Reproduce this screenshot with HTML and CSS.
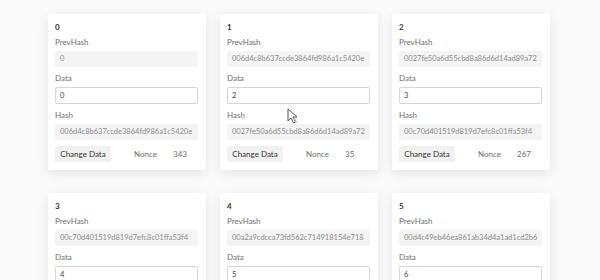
FILE: index.html
```html
<!DOCTYPE html>
<html lang="en">
<head>
    <meta charset="UTF-8">
    <meta name="viewport" content="width=device-width, initial-scale=1.0">
    <title>Blockchain</title>
    <link rel="stylesheet" href="styles.css">
</head>
<body>
    <div class="chain">
        <div class="block">
            <div class="block-id">0</div>
            <label class="field-label">PrevHash</label>
            <div class="field">0</div>
            <label class="field-label">Data</label>
            <input class="data-input" type="text" value="0">
            <label class="field-label">Hash</label>
            <div class="field">006d4c8b637ccde3864fd986a1c5420e</div>
            <div class="block-footer">
                <button class="change-btn">Change Data</button>
                <span class="nonce-label">Nonce</span>
                <span class="nonce-value">343</span>
            </div>
        </div>

        <div class="block">
            <div class="block-id">1</div>
            <label class="field-label">PrevHash</label>
            <div class="field">006d4c8b637ccde3864fd986a1c5420e</div>
            <label class="field-label">Data</label>
            <input class="data-input" type="text" value="2">
            <label class="field-label">Hash</label>
            <div class="field">0027fe50a6d55cbd8a86d6d14ad89a72</div>
            <div class="block-footer">
                <button class="change-btn">Change Data</button>
                <span class="nonce-label">Nonce</span>
                <span class="nonce-value">35</span>
            </div>
            <svg class="cursor" width="11" height="16" viewBox="0 0 11 16">
                <path d="M1 1 L1 13 L4 10 L6.5 15 L8.5 14 L6 9 L10 9 Z" fill="#fff" stroke="#555" stroke-width="1" stroke-linejoin="round"/>
                <path d="M7 10 L9.5 14.5" stroke="#bbb" stroke-width="1.5"/>
            </svg>
        </div>

        <div class="block">
            <div class="block-id">2</div>
            <label class="field-label">PrevHash</label>
            <div class="field">0027fe50a6d55cbd8a86d6d14ad89a72</div>
            <label class="field-label">Data</label>
            <input class="data-input" type="text" value="3">
            <label class="field-label">Hash</label>
            <div class="field">00c70d401519d819d7efc8c01ffa53f4</div>
            <div class="block-footer">
                <button class="change-btn">Change Data</button>
                <span class="nonce-label">Nonce</span>
                <span class="nonce-value">267</span>
            </div>
        </div>

        <div class="block">
            <div class="block-id">3</div>
            <label class="field-label">PrevHash</label>
            <div class="field">00c70d401519d819d7efc8c01ffa53f4</div>
            <label class="field-label">Data</label>
            <input class="data-input" type="text" value="4">
            <label class="field-label">Hash</label>
            <div class="field">00b7e1c2a94f3d6e58a0c7d2e1f93b46</div>
            <div class="block-footer">
                <button class="change-btn">Change Data</button>
                <span class="nonce-label">Nonce</span>
                <span class="nonce-value">112</span>
            </div>
        </div>

        <div class="block">
            <div class="block-id">4</div>
            <label class="field-label">PrevHash</label>
            <div class="field">00a2a9cdcca73fd562c714918154e718</div>
            <label class="field-label">Data</label>
            <input class="data-input" type="text" value="5">
            <label class="field-label">Hash</label>
            <div class="field">00d4c49eb46ea861ab34d4a1ad1cd2b6</div>
            <div class="block-footer">
                <button class="change-btn">Change Data</button>
                <span class="nonce-label">Nonce</span>
                <span class="nonce-value">58</span>
            </div>
        </div>

        <div class="block">
            <div class="block-id">5</div>
            <label class="field-label">PrevHash</label>
            <div class="field">00d4c49eb46ea861ab34d4a1ad1cd2b6</div>
            <label class="field-label">Data</label>
            <input class="data-input" type="text" value="6">
            <label class="field-label">Hash</label>
            <div class="field">0039a6e1f7c24b8d905e3f1a6c7b2d84</div>
            <div class="block-footer">
                <button class="change-btn">Change Data</button>
                <span class="nonce-label">Nonce</span>
                <span class="nonce-value">201</span>
            </div>
        </div>
    </div>
</body>
</html>
```

FILE: styles.css
```css
* {
    margin: 0;
    padding: 0;
    box-sizing: border-box;
}
body {
    font-family: Lato, 'Open Sans', sans-serif;
    background: #fafafb;
    color: #333;
    height: 280px;
    overflow: hidden;
}
.chain {
    display: grid;
    grid-template-columns: repeat(3, 158px);
    column-gap: 14px;
    row-gap: 23px;
    padding: 14px 0 0 48px;
}
.block {
    position: relative;
    background: #fff;
    border-radius: 2px;
    box-shadow: 0 3px 12px rgba(0, 0, 0, 0.09);
    padding: 8px 8px 8px 7px;
    display: flex;
    flex-direction: column;
}
.block-id {
    font-size: 8px;
    font-weight: 700;
    line-height: 10px;
    color: #333;
}
.field-label {
    display: block;
    font-size: 8px;
    line-height: 10px;
    color: #6e6e6e;
    margin: 6px 0 4px;
}
.block-id + .field-label {
    margin-top: 5px;
}
.field {
    height: 16px;
    background: #f4f4f5;
    border-radius: 2px;
    padding: 0 5px;
    font-size: 7.5px;
    line-height: 16px;
    color: #8a8a8a;
    white-space: nowrap;
    overflow: hidden;
}
.data-input {
    height: 17px;
    border: 1px solid #d6d6d8;
    border-radius: 2px;
    padding: 0 4px;
    font-family: inherit;
    font-size: 7.5px;
    color: #444;
    outline: none;
}
.block-footer {
    display: flex;
    align-items: center;
    margin-top: 6px;
    font-size: 8px;
    color: #6e6e6e;
}
.change-btn {
    width: 56px;
    height: 16px;
    border: none;
    border-radius: 2px;
    background: #f1f1f2;
    font-family: inherit;
    font-size: 8px;
    color: #333;
}
.nonce-label {
    margin-left: 23px;
    width: 39px;
}
.cursor {
    position: absolute;
    left: 67px;
    top: 94px;
}
```
